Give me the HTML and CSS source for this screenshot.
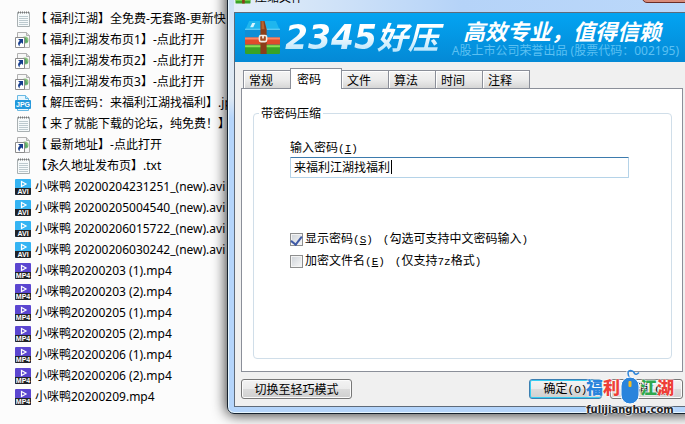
FILE: index.html
```
<!DOCTYPE html>
<html lang="zh-CN">
<head>
<meta charset="utf-8">
<title>压缩文件</title>
<link rel="stylesheet" href="styles.css">
</head>
<body>
<svg class="defs" aria-hidden="true">
	<symbol id="i-txt" viewBox="0 0 16 16">
		<path d="M2.5 1.5h12v14h-12z" fill="#f6fafb" stroke="#a9b0b2"/>
		<path d="M3 1.5h11" stroke="#777" stroke-width="2" stroke-dasharray="1 1"/>
		<path d="M4 5.5h9M4 7.5h9M4 9.5h9M4 11.5h9M4 13.5h9" stroke="#bcc9ce"/>
	</symbol>
	<symbol id="i-link" viewBox="0 0 16 16">
		<path d="M2.5.5h9l3 3v12h-12z" fill="#f7f7f7" stroke="#b0b0b0"/>
		<path d="M11.5.5v3h3" fill="#ddd" stroke="#b0b0b0"/>
		<circle cx="10" cy="8" r="3.5" fill="#8cc57c"/>
		<path d="M8 5l3 1 2 4-3 1z" fill="#5aa96a"/>
		<path d="M.5 5.5h9v10h-9z" fill="#fff" stroke="#8b8b8b"/>
		<path d="M3 7h5v5L6.5 10.5Q4 12 4.500 14.500 1.500 11.500 4.800 8.800z" fill="#153c8c"/>
	</symbol>
	<symbol id="i-page" viewBox="0 0 16 16">
		<path d="M2.5.5h8l3 3v12h-11z" fill="#e8f7ff" stroke="#69b9e3"/>
		<path d="M10.5.5v3h3" fill="#bde6fb" stroke="#69b9e3"/>
		<rect y="5" width="16" height="9" rx="1" fill="#2499dc"/>
	</symbol>
	<symbol id="i-play" viewBox="0 0 16 16">
		<rect width="16" height="16" rx="1" fill="currentColor"/>
		<path d="M6.500 2.500v5l4.500-2.500z" fill="none" stroke="#fff" stroke-width="1.200"/>
		<path d="M0 9h16v6q0 1-1 1H1q-1 0-1-1z" fill="#202328"/>
	</symbol>
	<symbol id="i-zip" viewBox="0 0 36 34">
		<path d="M5 1h26l4 9H1z" fill="#1fb6ee"/>
		<path d="M1 9h34v9H1z" fill="#108ed5"/>
		<path d="M1 9h34" stroke="#75d8fb"/>
		<path d="M6 7l2-4h3L9 7z" fill="#d8f5ff"/>
		<path d="M1 17h34v7H1z" fill="#e04b2b"/>
		<path d="M1 18h34" stroke="#ff8665" stroke-width="2"/>
		<path d="M1 24h34v8q0 1-1 1H2q-1 0-1-1z" fill="#38a226"/>
		<path d="M1 25.500h34" stroke="#8ade54" stroke-width="2"/>
		<path d="M16 1h4l2 8v24h-6V9z" fill="#8b3d19"/>
		<path d="M17 1h2l1 8h-3z" fill="#b9622c"/>
		<rect x="15" y="15" width="7" height="6" rx="1.500" fill="#a54d22" stroke="#f2eee7" stroke-width="1.500"/>
		<path d="M18.500 15v3" stroke="#fff" stroke-width="1.500"/>
	</symbol>
</svg>

<ul class="files">
	<li><span class="icon"><svg><use href="#i-txt"/></svg></span>【 福利江湖】全免费-无套路-更新快</li>
	<li><span class="icon"><svg><use href="#i-link"/></svg></span>【 福利江湖发布页1】-点此打开</li>
	<li><span class="icon"><svg><use href="#i-link"/></svg></span>【 福利江湖发布页2】-点此打开</li>
	<li><span class="icon"><svg><use href="#i-link"/></svg></span>【 福利江湖发布页3】-点此打开</li>
	<li><span class="icon jpg"><svg><use href="#i-page"/></svg><b>JPG</b></span>【 解压密码：来福利江湖找福利】.jpg</li>
	<li><span class="icon"><svg><use href="#i-txt"/></svg></span>【 来了就能下载的论坛，纯免费！】</li>
	<li><span class="icon"><svg><use href="#i-link"/></svg></span>【 最新地址】-点此打开</li>
	<li><span class="icon"><svg><use href="#i-txt"/></svg></span>【永久地址发布页】.txt</li>
	<li><span class="icon avi"><svg><use href="#i-play"/></svg><b>AVI</b></span>小咪鸭 20200204231251_(new).avi</li>
	<li><span class="icon avi"><svg><use href="#i-play"/></svg><b>AVI</b></span>小咪鸭 20200205004540_(new).avi</li>
	<li><span class="icon avi"><svg><use href="#i-play"/></svg><b>AVI</b></span>小咪鸭 20200206015722_(new).avi</li>
	<li><span class="icon avi"><svg><use href="#i-play"/></svg><b>AVI</b></span>小咪鸭 20200206030242_(new).avi</li>
	<li><span class="icon mp4"><svg><use href="#i-play"/></svg><b>MP4</b></span>小咪鸭20200203 (1).mp4</li>
	<li><span class="icon mp4"><svg><use href="#i-play"/></svg><b>MP4</b></span>小咪鸭20200203 (2).mp4</li>
	<li><span class="icon mp4"><svg><use href="#i-play"/></svg><b>MP4</b></span>小咪鸭20200205 (1).mp4</li>
	<li><span class="icon mp4"><svg><use href="#i-play"/></svg><b>MP4</b></span>小咪鸭20200205 (2).mp4</li>
	<li><span class="icon mp4"><svg><use href="#i-play"/></svg><b>MP4</b></span>小咪鸭20200206 (1).mp4</li>
	<li><span class="icon mp4"><svg><use href="#i-play"/></svg><b>MP4</b></span>小咪鸭20200206 (2).mp4</li>
	<li><span class="icon mp4"><svg><use href="#i-play"/></svg><b>MP4</b></span>小咪鸭20200209.mp4</li>
</ul>

<div class="window">
	<div class="titlebar">
		<svg><use href="#i-zip"/></svg>
		<span>压缩文件</span>
		<button type="button" class="close" aria-label="关闭"></button>
	</div>
	<div class="client">
		<div class="banner">
			<svg class="logo"><use href="#i-zip"/></svg>
			<div class="brand">2345<span>好压</span></div>
			<div class="slogan">
				<strong>高效专业，值得信赖</strong>
				<p>A股上市公司荣誉出品 (股票代码：002195)</p>
			</div>
		</div>
		<div class="tabs">
			<button type="button">常规</button>
			<button type="button" class="active">密码</button>
			<button type="button">文件</button>
			<button type="button">算法</button>
			<button type="button">时间</button>
			<button type="button">注释</button>
		</div>
		<div class="pane">
			<fieldset class="group">
				<legend>带密码压缩</legend>
				<label for="pwd">输入密码<span class="half">(<u>I</u>)</span></label>
				<input type="text" id="pwd" class="pwd" value="来福利江湖找福利">
				<div class="check first">
					<input type="checkbox" id="show" checked>
					<label for="show">显示密码<span class="half">(<u>S</u>)</span></label>
					<span class="note"><span class="half">(</span>勾选可支持中文密码输入<span class="half">)</span></span>
				</div>
				<div class="check">
					<input type="checkbox" id="enc">
					<label for="enc">加密文件名<span class="half">(<u>E</u>)</span></label>
					<span class="note"><span class="half">(</span>仅支持<span class="half">7z</span>格式<span class="half">)</span></span>
				</div>
			</fieldset>
		</div>
		<div class="footer">
			<button type="button" class="btn wide">切换至轻巧模式</button>
			<button type="button" class="btn default">确定<span class="half">(O)</span></button>
			<button type="button" class="btn">取消<span class="half">(<u>C</u>)</span></button>
		</div>
	</div>
</div>

<div class="mark">
	<div class="mark-name">
		<span class="blue">福</span><span class="red">利</span>
		<svg viewBox="0 0 20 36">
			<path d="M9 11V5Q9 2 6 3" fill="none" stroke="#fff" stroke-width="1"/>
			<path d="M10 11Q10 8 8.500 6.500 7 1.500 10.500 1.500 14 2 14.500 4.500 16 6.500 19 3.500" fill="none" stroke="#2a84dc" stroke-width="1.500"/>
			<rect x="1" y="8" width="18" height="27" rx="9" fill="#2a84dc" stroke="#fff"/>
			<rect x="8.500" y="12" width="3" height="6" rx="1" fill="#f5bd22"/>
		</svg>
		<span class="green">江</span><span class="red">湖</span>
	</div>
	<div class="mark-url">fulijianghu.com</div>
</div>
</body>
</html>
```
FILE: styles.css
```
*{ margin:0; padding:0; box-sizing:border-box;}
body{ min-height:100vh; overflow:hidden; position:relative; background:#fcfcfc; color:#000; font:12px/16px "Noto Sans","Noto Sans CJK SC",sans-serif;}
li{ list-style:none;}
button,input{ font:inherit; color:inherit;}
.defs{ position:absolute; width:0; height:0;}

/* file list */
.files{ padding:8px 0 0 15px;}
.files li{ height:21px; display:flex; align-items:center; gap:4px; white-space:pre;}
.icon{ width:16px; height:16px; flex:none; display:grid;}
.icon svg,.icon b{ grid-area:1/1; width:16px; height:16px;}
.icon b{ padding-top:9px; color:#fff; font:bold 7px/7px "Liberation Sans",sans-serif; text-align:center; z-index:0;}
.avi{ color:#35b4f3;}
.mp4{ color:#5b46d0;}
.jpg b{ padding-top:6px;}

/* window */
.window{ position:absolute; top:-18px; left:227px; right:-12px; padding:0 6px 6px; border:1px solid #16222e; border-radius:7px; background:linear-gradient(#c2daf5,#dfeaf5 60px,#dde8f3 115px,#b5d5fb 135px); box-shadow:inset 0 0 0 1px #e6f6ff,0 0 14px 1px rgba(0,0,0,.8); font-family:"Noto Sans CJK SC",sans-serif;}
.titlebar{ height:29px; padding:6px 0 0 1px; display:flex; gap:4px; background:linear-gradient(90deg,#e4eef8,#b5d3f8 50%,#bbd8fa);}
.titlebar svg{ width:16px; height:15px;}
.close{ width:48px; height:14px; margin-left:auto; border:1px solid #6b2d27; border-radius:0 0 5px 5px; background:#d98c7b;}
.client{ border:1px solid #5f6b7a; background:#f0f0f0; padding-bottom:7px;}

.banner{ height:49px; padding:0 10px 0 9px; display:flex; align-items:center; background:linear-gradient(#03a4f2,#0489d5); overflow:hidden;}
.logo{ width:37px; height:35px; flex:none; margin-right:4px;}
.brand{ padding-right:8px; font:italic bold 33px/49px "DejaVu Sans",sans-serif; white-space:nowrap; color:transparent; background:linear-gradient(#fff 40%,#bfe7fc 75%); -webkit-background-clip:text; background-clip:text;}
.brand span{ font:italic bold 31px/40px "Noto Sans CJK SC",sans-serif;}
.slogan{ margin-left:auto; text-align:right; white-space:nowrap; color:#5cc0f2;}
.slogan strong{ display:block; padding-right:18px; font:italic bold 22px/26px "Noto Sans CJK SC",sans-serif; color:#fff;}
.slogan p{ font-family:"Noto Sans","Noto Sans CJK SC",sans-serif;}

/* tabs */
.tabs{ padding:6px 0 0 8px; display:flex; align-items:flex-end;}
.tabs button{ width:48px; height:18px; padding-right:12px; border:1px solid #8b8f99; border-bottom:0; background:linear-gradient(#f4f4f4,#ececec 50%,#d6d6d6); box-shadow:inset 1px 1px #fff; line-height:16px;}
.tabs button+button{ margin-left:-1px;}
.tabs .active{ width:52px; height:21px; margin-bottom:-1px; padding-right:14px; background:#fff; position:relative; z-index:1;}
.pane{ margin:0 6px; padding:16px 10px 12px 11px; border:1px solid #8b8f99; background:#fff;}
.group{ height:254px; padding:18px 42px 0 36px; border:1px solid #d0dee9; border-radius:4px;}
.group legend{ margin-left:-31px; padding:0 2px;}
.group label{ display:inline-block;}
.half{ font-family:"Liberation Mono",monospace; font-size:11px;}
.pwd{ display:block; width:100%; height:21px; padding:0 3px 2px; border:1px solid #b5d3e8; border-top-color:#3d7bad; border-radius:1px; outline:0; background:linear-gradient(#000,#000) 100px 2px/1px 14px no-repeat #fff;}
.check{ height:22px; display:flex; align-items:center;}
.check.first{ margin-top:50px;}
.check input{ -webkit-appearance:none; appearance:none; width:13px; height:13px; margin-right:2px; border:1px solid #8e8f8f; background:linear-gradient(135deg,#cdd2d8,#f8f8f8); box-shadow:inset 0 0 0 1px #f4f4f4; display:flex; justify-content:center;}
.check input:checked::after{ content:""; width:5px; height:9px; border:solid #3f5aa6; border-width:0 2px 2px 0; transform:rotate(38deg);}
.note{ margin-left:10px;}

.footer{ padding:7px 6px 0; display:flex; gap:8px;}
.btn{ width:73px; height:20px; border:1px solid #777; border-radius:3px; background:linear-gradient(#f3f3f3,#ebebeb 50%,#dcdcdc 50%,#cfcfcf); box-shadow:inset 0 0 0 1px #fbfbfb; line-height:16px;}
.wide{ width:111px; margin-right:auto;}
.default{ border-color:#3c7fb1; box-shadow:inset 0 0 0 1px #36cdf3;}

/* site mark over the buttons */
.mark{ position:absolute; right:9px; bottom:8px; width:92px; text-align:center;}
.mark-name{ display:flex; justify-content:center; align-items:center; height:34px; font:900 17px/20px "Noto Sans CJK SC",sans-serif; text-shadow:0 0 2px #fff,0 0 2px #fff;}
.mark-name svg{ width:20px; height:36px; flex:none;}
.mark-url{ font:bold 10px/12px "DejaVu Sans",sans-serif; color:#222; text-shadow:0 0 2px #fff,0 0 2px #fff,0 0 2px #fff;}
.blue{ color:#2a84dc;}
.red{ color:#ee3f38;}
.green{ color:#2fa84f;}
```
